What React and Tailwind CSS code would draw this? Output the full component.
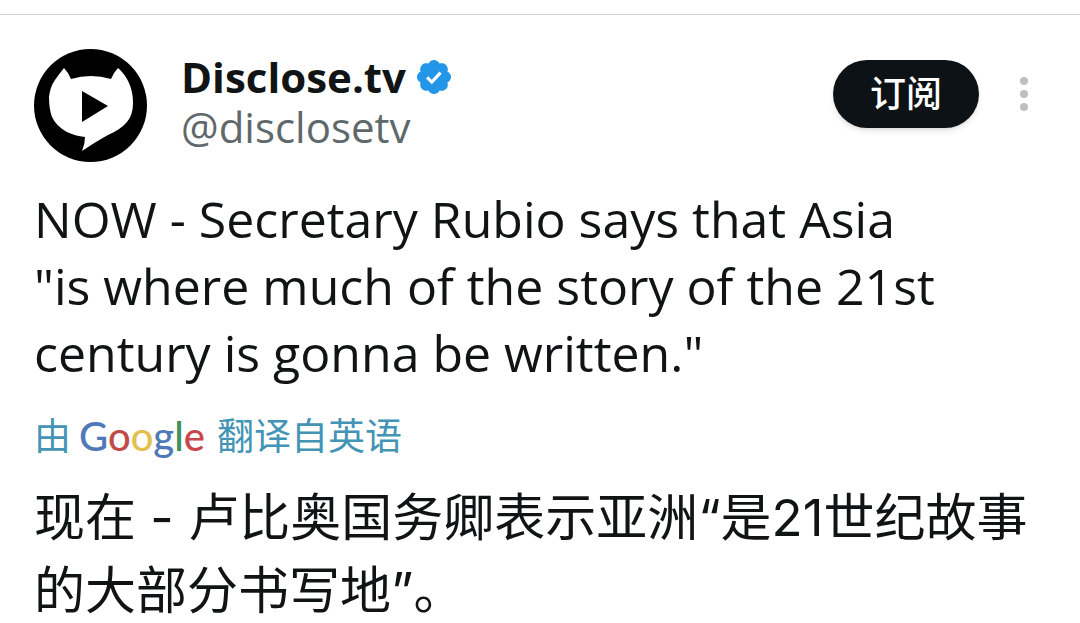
import React from 'react';

const GOOGLE_LETTERS = [
    { char: 'G', color: 'text-[#4f79b8]' },
    { char: 'o', color: 'text-[#c04a45]' },
    { char: 'o', color: 'text-[#e3c04c]' },
    { char: 'g', color: 'text-[#4f79b8]' },
    { char: 'l', color: 'text-[#3f8f5c]' },
    { char: 'e', color: 'text-[#c9474a]' },
];

const Avatar = () => (
    <svg viewBox="0 0 113 113" className="w-[113px] h-[113px] shrink-0" role="img" aria-label="Disclose.tv">
        <circle cx="56.5" cy="56.5" r="56.5" fill="#000" />
        <path
            d="M30 19Q34 23 37 30Q57 24 77 30Q80 23 84 19Q91 25 95 34Q99 43 99 54Q99 66 93 73Q86 81 74 86Q63 92 48 102Q51 95 51 88Q41 87 33 83Q22 77 18 68Q15 60 15 48Q16 38 21 31Q25 25 30 19Z"
            fill="#fff"
        />
        <path d="M48 42L74 57L48 73Z" fill="#000" />
    </svg>
);

const VerifiedBadge = () => (
    <svg viewBox="0 0 22 22" className="w-10 h-10 shrink-0" role="img" aria-label="认证账号">
        <path
            fill="#2496e8"
            d="M20.396 11c-.018-.646-.215-1.275-.57-1.816-.354-.54-.852-.972-1.438-1.246.223-.607.27-1.264.14-1.897-.131-.634-.437-1.218-.882-1.687-.47-.445-1.053-.75-1.687-.882-.633-.13-1.29-.083-1.897.14-.273-.587-.704-1.086-1.245-1.44S11.647 1.62 11 1.604c-.646.017-1.273.213-1.813.568s-.969.854-1.24 1.44c-.608-.223-1.267-.272-1.902-.14-.635.13-1.22.436-1.69.882-.445.47-.749 1.055-.878 1.688-.13.633-.08 1.29.144 1.896-.587.274-1.087.705-1.443 1.245-.356.54-.555 1.17-.574 1.817.02.647.218 1.276.574 1.817.356.54.856.972 1.443 1.245-.224.606-.274 1.263-.144 1.896.13.634.433 1.218.877 1.688.47.443 1.054.747 1.687.878.633.132 1.29.084 1.897-.136.274.586.705 1.084 1.246 1.439.54.354 1.17.551 1.816.569.647-.016 1.276-.213 1.817-.567s.972-.854 1.245-1.44c.604.239 1.266.296 1.903.164.636-.132 1.22-.447 1.68-.907.46-.46.776-1.044.908-1.681s.075-1.299-.165-1.903c.586-.274 1.084-.705 1.439-1.246.354-.54.551-1.17.569-1.816z"
        />
        <path d="M7.2 11.2L9.8 13.8L14.6 8.6" fill="none" stroke="#fff" strokeWidth="1.7" />
    </svg>
);

const PostHeader = () => (
    <header className="flex items-start">
        <Avatar />
        <div className="ml-[34px] mt-[3px] min-w-0">
            <div className="flex items-center gap-2">
                <span className="text-[42px] leading-[50px] font-bold">Disclose.tv</span>
                <VerifiedBadge />
            </div>
            <a href="#disclosetv" className="block text-[42px] leading-[50px] text-[#5f686b]">@disclosetv</a>
        </div>
        <div className="ml-auto mt-[11px] flex items-center gap-9">
            <button
                type="button"
                className="h-[68px] px-[37px] rounded-full bg-[#0d1216] text-white text-[36px] leading-none font-medium shadow-md"
            >
                订阅
            </button>
            <button type="button" aria-label="更多" className="w-[18px] h-[34px]">
                <svg viewBox="0 0 18 34" className="w-full h-full" fill="#bfbfbf">
                    <circle cx="9" cy="4" r="4" />
                    <circle cx="9" cy="17" r="4" />
                    <circle cx="9" cy="30" r="4" />
                </svg>
            </button>
        </div>
    </header>
);

const App = () => (
    <main className="pt-[14px] bg-white text-[#111414] font-['Open_Sans','Noto_Sans_CJK_SC',sans-serif]">
        <article lang="zh-CN" className="border-t border-[#d2d2d2] pt-[34px] pl-[34px] pr-[47px]">
            <PostHeader />

            <p lang="en" className="mt-6 text-[50px] leading-[67px]">
                NOW - Secretary Rubio says that Asia<br />
                "is where much of the story of the 21st<br />
                century is gonna be written."
            </p>

            <a href="#translation" className="mt-6 flex items-center gap-2 text-[37px] leading-[50px] text-[#4394b5]">
                <span>由</span>
                <span className="mr-1 text-[40px] font-['Lato',sans-serif] font-medium">
                    {GOOGLE_LETTERS.map((letter, i) => (
                        <span key={i} className={letter.color}>{letter.char}</span>
                    ))}
                </span>
                <span>翻译自英语</span>
            </a>

            <p className="mt-5 text-[51px] leading-[73px] font-['Inter','Noto_Sans_CJK_SC',sans-serif]">
                现在 - 卢比奥国务卿表示亚洲“是21世纪故事的大部分书写地”。
            </p>
        </article>
    </main>
);

export default App;
